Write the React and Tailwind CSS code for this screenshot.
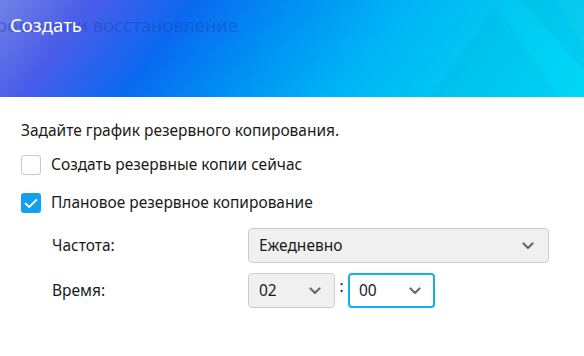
import React from "react";

function Chevron({ className = "" }) {
  return (
    <svg width="12" height="8" viewBox="0 0 12 8" className={className}>
      <path d="M1.5 1.5 L6 6 L10.5 1.5" fill="none" stroke="#6b6b6b" strokeWidth="2.2" strokeLinecap="round" strokeLinejoin="round" />
    </svg>
  );
}

export default function App() {
  return (
    <div className="w-[584px] h-[356px] bg-white overflow-hidden text-[#1a1a1a]" style={{ fontFamily: '"Noto Sans", "Open Sans", sans-serif' }}>
      <div className="relative h-[97px] overflow-hidden bg-[linear-gradient(128deg,#7182e6_0%,#4a5ce9_14%,#0a6af0_30%,#0090f3_45%,#00b4f5_62%,#00caf2_80%,#00d8f6_100%)]">
        <svg className="absolute inset-0" width="584" height="97" viewBox="0 0 584 97">
          <polygon points="495,5 430,97 560,97" fill="#0060c0" opacity="0.06" />
          <polygon points="520,0 584,0 584,70" fill="#006ab0" opacity="0.07" />
          <polygon points="555,0 584,0 584,45" fill="#ffffff" opacity="0.03" />
        </svg>
        <span className="absolute top-[11px] right-[346px] whitespace-nowrap text-[18.5px] text-[#1a40c0]/45">
          Резервное копирование и восстановление
        </span>
        <span className="absolute top-[11px] left-[10px] text-[18.5px] text-white">Создать</span>
      </div>
      <div className="pl-[21px] pt-[22px] text-[15.5px]">
        <div className="leading-[22px]">Задайте график резервного копирования.</div>
        <div className="flex items-center gap-[10px] mt-[14px] h-[20px]">
          <div className="w-[20px] h-[20px] rounded-[3px] border border-[#c8c8c8] bg-white"></div>
          <span>Создать резервные копии сейчас</span>
        </div>
        <div className="flex items-center gap-[10px] mt-[18px] h-[20px]">
          <div className="w-[20px] h-[20px] rounded-[3px] bg-[#12a0ee] flex items-center justify-center">
            <svg width="14" height="11" viewBox="0 0 14 11">
              <path d="M1.5 5.5 L5.2 9 L12.5 1.8" fill="none" stroke="white" strokeWidth="1.8" strokeLinecap="round" strokeLinejoin="round" />
            </svg>
          </div>
          <span>Плановое резервное копирование</span>
        </div>
        <div className="flex items-center mt-[15px] h-[35px]">
          <span className="w-[227px] pl-[31px]">Частота:</span>
          <div className="w-[301px] h-[35px] rounded-[4px] border border-[#cdcdcd] bg-[#f0f0f0] flex items-center justify-between pl-[10px] pr-[14px]">
            <span>Ежедневно</span>
            <Chevron />
          </div>
        </div>
        <div className="flex items-center mt-[10px] h-[35px]">
          <span className="w-[227px] pl-[31px]">Время:</span>
          <div className="w-[87px] h-[35px] rounded-[4px] border border-[#cdcdcd] bg-[#f0f0f0] flex items-center justify-between pl-[10px] pr-[13px]">
            <span>02</span>
            <Chevron />
          </div>
          <span className="w-[13px] text-center -mt-[8px]">:</span>
          <div className="w-[87px] h-[35px] rounded-[4px] border-2 border-[#14b0e6] bg-white flex items-center justify-between pl-[9px] pr-[12px]">
            <span>00</span>
            <Chevron />
          </div>
        </div>
      </div>
    </div>
  );
}
